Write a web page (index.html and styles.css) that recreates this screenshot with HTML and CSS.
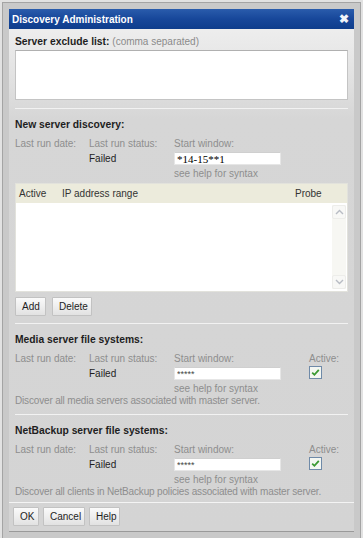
FILE: index.html
```html
<!DOCTYPE html>
<html lang="en">
<head>
    <meta charset="UTF-8">
    <meta name="viewport" content="width=device-width, initial-scale=1.0">
    <title>Discovery Administration</title>
    <link rel="stylesheet" href="styles.css">
</head>
<body>
    <div class="frame">
        <div class="dialog">
            <div class="titlebar">
                <span>Discovery Administration</span>
                <span class="close">&#10006;</span>
            </div>
            <div class="content">
                <div class="section first">
                    <div class="section-title">Server exclude list: <span class="hint">(comma separated)</span></div>
                    <textarea class="exclude"></textarea>
                </div>

                <div class="section">
                    <div class="section-title">New server discovery:</div>
                    <div class="fields">
                        <span class="lbl">Last run date:</span>
                        <span class="lbl">Last run status:</span>
                        <span class="lbl">Start window:</span>
                        <span></span>
                        <span></span>
                        <span class="val">Failed</span>
                        <input class="win serif" type="text" value="*14-15**1">
                        <span></span>
                        <span></span>
                        <span></span>
                        <span class="lbl help">see help for syntax</span>
                        <span></span>
                    </div>
                    <div class="ranges">
                        <div class="ranges-head">
                            <span class="col-active">Active</span>
                            <span class="col-ip">IP address range</span>
                            <span class="col-probe">Probe</span>
                        </div>
                        <div class="ranges-body">
                            <div class="scroll">
                                <div class="arrow">
                                    <svg width="9" height="6" viewBox="0 0 9 6"><path d="M1 5 L4.5 1.5 L8 5" fill="none" stroke="#b8bcc4" stroke-width="1.4"/></svg>
                                </div>
                                <div class="arrow">
                                    <svg width="9" height="6" viewBox="0 0 9 6"><path d="M1 1 L4.5 4.5 L8 1" fill="none" stroke="#b8bcc4" stroke-width="1.4"/></svg>
                                </div>
                            </div>
                        </div>
                    </div>
                    <div class="buttons">
                        <button class="btn add">Add</button>
                        <button class="btn del">Delete</button>
                    </div>
                </div>

                <div class="section">
                    <div class="section-title">Media server file systems:</div>
                    <div class="fields">
                        <span class="lbl">Last run date:</span>
                        <span class="lbl">Last run status:</span>
                        <span class="lbl">Start window:</span>
                        <span class="lbl">Active:</span>
                        <span></span>
                        <span class="val">Failed</span>
                        <input class="win stars" type="text" value="*****">
                        <span class="check">
                            <svg width="13" height="13" viewBox="0 0 13 13"><rect x="0.5" y="0.5" width="12" height="12" fill="#f4f7f2" stroke="#6f8aa8"/><path d="M3.2 6.6 L5.4 8.8 L9.8 3.8" fill="none" stroke="#3a9a32" stroke-width="1.8"/></svg>
                        </span>
                        <span></span>
                        <span></span>
                        <span class="lbl help">see help for syntax</span>
                        <span></span>
                    </div>
                    <div class="lbl note">Discover all media servers associated with master server.</div>
                </div>

                <div class="section last">
                    <div class="section-title">NetBackup server file systems:</div>
                    <div class="fields">
                        <span class="lbl">Last run date:</span>
                        <span class="lbl">Last run status:</span>
                        <span class="lbl">Start window:</span>
                        <span class="lbl">Active:</span>
                        <span></span>
                        <span class="val">Failed</span>
                        <input class="win stars" type="text" value="*****">
                        <span class="check">
                            <svg width="13" height="13" viewBox="0 0 13 13"><rect x="0.5" y="0.5" width="12" height="12" fill="#f4f7f2" stroke="#6f8aa8"/><path d="M3.2 6.6 L5.4 8.8 L9.8 3.8" fill="none" stroke="#3a9a32" stroke-width="1.8"/></svg>
                        </span>
                        <span></span>
                        <span></span>
                        <span class="lbl help">see help for syntax</span>
                        <span></span>
                    </div>
                    <div class="lbl note">Discover all clients in NetBackup policies associated with master server.</div>
                </div>
            </div>
            <div class="footer">
                <button class="btn ok">OK</button>
                <button class="btn cancel">Cancel</button>
                <button class="btn help-btn">Help</button>
            </div>
        </div>
    </div>
</body>
</html>
```

FILE: styles.css
```css
body {
    margin: 0;
    padding: 0;
    background-color: #e2e2e2;
    font-family: "Liberation Sans", Arial, sans-serif;
    font-size: 10px;
    color: #222;
}

.frame {
    margin: 2px 2px 0 2px;
    height: 536px;
    box-sizing: border-box;
    border: 1px solid #a4a4a4;
    border-bottom: none;
    background-color: #c9c9c9;
    padding: 6px 6px 0 6px;
}

.dialog {
    background: linear-gradient(to bottom, #f2f2f2 0px, #e4e4e4 60px, #d6d6d6 110px, #d4d4d4 100%);
    height: 522px;
    border-bottom: 1px solid #9a9a9a;
}

.titlebar {
    height: 20px;
    background: linear-gradient(to bottom, #2a5cac 0%, #17479a 50%, #0e3d8c 100%);
    color: white;
    font-weight: bold;
    font-size: 10px;
    display: flex;
    justify-content: space-between;
    align-items: center;
    padding: 0 5px 0 3px;
}

.close {
    font-size: 12px;
    color: #f0f4fa;
}

.content {
    padding: 0 6px;
}

.section {
    padding-top: 9px;
    padding-bottom: 7px;
    border-bottom: 1px solid #f2f2f2;
}

.section.first {
    padding-top: 6px;
    padding-bottom: 8px;
}

.section.last {
    border-bottom: none;
    padding-bottom: 4px;
}

.section-title {
    font-weight: bold;
    font-size: 10.3px;
    line-height: 13px;
    margin-bottom: 6px;
    color: #1e1e1e;
}

.first .section-title {
    margin-bottom: 2px;
}

.hint {
    font-weight: normal;
    font-size: 10px;
    color: #8a8a8a;
}

.exclude {
    display: block;
    width: 333px;
    height: 50px;
    box-sizing: border-box;
    margin: 0;
    border: 1px solid #c4c4c4;
    border-top-color: #b0b0b0;
    background-color: white;
    resize: none;
}

.fields {
    display: grid;
    grid-template-columns: 74px 85px 135px 1fr;
    grid-template-rows: 15px 16px 12px;
    align-items: start;
}

.lbl {
    color: #8e8e8e;
    line-height: 13px;
}

.lbl.help {
    line-height: 12px;
}

.val {
    line-height: 13px;
    color: #1e1e1e;
}

.win {
    width: 107px;
    height: 13px;
    box-sizing: border-box;
    margin: 0;
    padding: 0 2px;
    border: 1px solid #e6e6e6;
    border-top-color: #cfcfcf;
    background-color: white;
    outline: none;
}

.serif {
    font-family: "Liberation Serif", "Times New Roman", serif;
    font-size: 11px;
    color: #000;
}

.stars {
    font-family: "Liberation Sans", Arial, sans-serif;
    font-size: 9px;
    color: #444;
}

.check {
    display: block;
    height: 13px;
    margin-top: -1px;
}

.note {
    line-height: 12px;
    letter-spacing: -0.17px;
}

.ranges {
    margin-top: 3px;
    width: 333px;
    border: 1px solid #e2e2dc;
    box-sizing: border-box;
}

.ranges-head {
    height: 19px;
    background-color: #ecebdc;
    display: flex;
    align-items: center;
    color: #333;
}

.col-active {
    width: 43px;
    padding-left: 3px;
}

.col-ip {
    flex: 1;
}

.col-probe {
    width: 52px;
}

.ranges-body {
    height: 88px;
    background-color: white;
    display: flex;
    justify-content: flex-end;
    padding: 2px 1px 2px 0;
    box-sizing: border-box;
}

.scroll {
    width: 14px;
    background-color: #f7f7f3;
    display: flex;
    flex-direction: column;
    justify-content: space-between;
}

.arrow {
    height: 14px;
    border: 1px solid #ededea;
    box-sizing: border-box;
    background-color: #f8f8f6;
    border-radius: 2px;
    display: flex;
    align-items: center;
    justify-content: center;
}

.buttons {
    display: flex;
    gap: 6px;
    margin-top: 5px;
}

.btn {
    height: 19px;
    padding: 0 6px;
    font-family: "Liberation Sans", Arial, sans-serif;
    font-size: 10px;
    color: #1e1e1e;
    background: linear-gradient(to bottom, #fafafa 0%, #ececec 60%, #e2e2e2 100%);
    border: 1px solid #c2c2c2;
    border-radius: 1px;
    cursor: pointer;
}

.btn.add {
    width: 31px;
}

.btn.del {
    width: 40px;
}

.footer {
    border-top: 1px solid #f4f4f4;
    padding: 4px 4px 0 4px;
    display: flex;
    gap: 4px;
}

.btn.ok {
    width: 26px;
}

.btn.cancel {
    width: 42px;
}

.btn.help-btn {
    width: 31px;
}
```
